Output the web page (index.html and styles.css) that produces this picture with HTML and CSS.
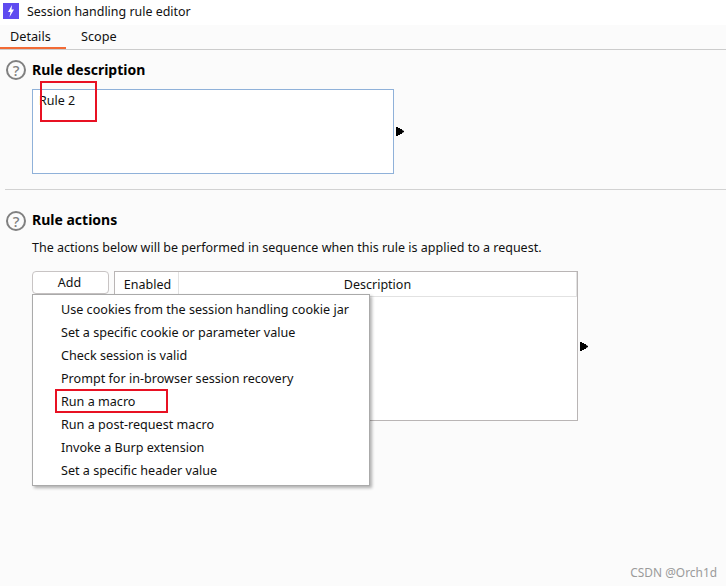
FILE: index.html
```html
<!DOCTYPE html>
<html lang="en">
<head>
  <meta charset="UTF-8">
  <meta name="viewport" content="width=device-width, initial-scale=1">
  <title>Session handling rule editor</title>
  <link rel="stylesheet" href="styles.css">
</head>
<body>
  <!-- Window title -->
  <div class="titlebar">
    <svg class="app-icon" width="16" height="16" viewBox="0 0 16 16">
      <rect width="16" height="16" fill="#5f4bf0"/>
      <path d="M9 2 L5 9 H7.5 L6.5 14 L11 6.5 H8.5 Z" fill="#fff"/>
    </svg>
    <span>Session handling rule editor</span>
  </div>

  <!-- Tabs -->
  <div class="tabs">
    <div class="tab active">Details</div>
    <div class="tab">Scope</div>
  </div>

  <!-- Rule description -->
  <section class="section first">
    <div class="section-head">
      <span class="help">?</span>
      <h2>Rule description</h2>
    </div>
    <div class="with-arrow">
      <div class="desc-box">Rule 2</div>
      <span class="arrow"></span>
    </div>
    <div class="mark mark-rule"></div>
  </section>

  <div class="divider"></div>

  <!-- Rule actions -->
  <section class="section second">
    <div class="section-head">
      <span class="help">?</span>
      <h2>Rule actions</h2>
    </div>
    <p class="intro">The actions below will be performed in sequence when this rule is applied to a request.</p>
    <div class="actions">
      <button class="add-btn">Add</button>
      <div class="table">
        <div class="table-head">
          <div class="col-enabled">Enabled</div>
          <div class="col-desc">Description</div>
        </div>
      </div>
      <span class="arrow"></span>

      <!-- Popup menu of Add -->
      <ul class="menu">
        <li>Use cookies from the session handling cookie jar</li>
        <li>Set a specific cookie or parameter value</li>
        <li>Check session is valid</li>
        <li>Prompt for in-browser session recovery</li>
        <li class="marked">Run a macro</li>
        <li>Run a post-request macro</li>
        <li>Invoke a Burp extension</li>
        <li>Set a specific header value</li>
      </ul>
    </div>
  </section>

  <div class="watermark">CSDN @Orch1d</div>
</body>
</html>
```

FILE: styles.css
```css
html, body {
  margin: 0;
  padding: 0;
  height: 100%;
  overflow: hidden;
}
body {
  position: relative;
  background-color: #fbfbfb;
  color: #111;
  font-family: "Noto Sans", "Open Sans", sans-serif;
  font-size: 12.5px;
}
/* Window title */
.titlebar {
  display: flex;
  align-items: center;
  gap: 8px;
  height: 25px;
  padding: 0 0 3px 3px;
  box-sizing: border-box;
  background: #fff;
  font-size: 12.45px;
}
.app-icon {
  display: block;
}
/* Tabs */
.tabs {
  display: flex;
  height: 25px;
  box-sizing: border-box;
  border-bottom: 1px solid #ccc;
}
.tab {
  width: 66px;
  height: 24px;
  box-sizing: border-box;
  padding: 2px 0 0 10px;
  font-size: 12.7px;
}
.tab:last-child {
  padding-left: 15px;
}
.tab.active {
  border-bottom: 2px solid #f26a35;
}
/* Sections */
.section {
  position: relative;
  padding-left: 6px;
}
.section.first {
  padding-top: 10px;
}
.section.second {
  padding-top: 21px;
}
.section-head {
  display: flex;
  align-items: center;
  gap: 6px;
  height: 20px;
}
.section-head h2 {
  margin: 0 0 3px;
  font-size: 14px;
  font-weight: 700;
  color: #000;
}
.section.first h2 {
  margin-bottom: 1px;
}
.help {
  width: 20px;
  height: 20px;
  box-sizing: border-box;
  border: 2px solid #808080;
  border-radius: 50%;
  color: #808080;
  font-size: 15px;
  font-weight: 500;
  line-height: 16px;
  text-align: center;
}
.with-arrow {
  display: flex;
  align-items: center;
  gap: 2px;
  margin: 9px 0 0 26px;
}
.desc-box {
  width: 362px;
  height: 85px;
  box-sizing: border-box;
  padding: 2px 6px;
  background: #fff;
  border: 1px solid #8fb1d9;
}
/* Small stepped play arrow */
.arrow {
  display: block;
  width: 8px;
  height: 9px;
  background: #000;
  clip-path: polygon(0 0, 25% 0, 25% 11%, 50% 11%, 50% 22%, 75% 22%, 75% 33%, 100% 44%, 100% 56%, 75% 67%, 75% 78%, 50% 78%, 50% 89%, 25% 89%, 25% 100%, 0 100%);
}
.divider {
  height: 1px;
  margin: 15px 0 0 5px;
  background: #d2d2d2;
}
.intro {
  margin: 8px 0 0 26px;
  line-height: 18px;
}
/* Button, table and its popup */
.actions {
  position: relative;
  display: flex;
  align-items: flex-start;
  margin: 14px 0 0 26px;
}
.add-btn {
  width: 77px;
  height: 23px;
  padding: 0 2px 0 0;
  background: #fff;
  border: 1px solid #c8c4c4;
  border-radius: 4px;
  color: #111;
  font: inherit;
}
.table {
  width: 464px;
  height: 150px;
  margin-left: 5px;
  box-sizing: border-box;
  background: #fff;
  border: 1px solid #b9b5b5;
}
.table-head {
  display: flex;
  height: 25px;
  box-sizing: border-box;
  border-bottom: 1px solid #e2e2e2;
  border-right: 1px solid #e2e2e2;
  line-height: 26px;
}
.col-enabled {
  width: 64px;
  padding-left: 2px;
  box-sizing: border-box;
  border-right: 1px solid #e2e2e2;
  text-align: center;
}
.col-desc {
  flex: 1;
  text-align: center;
}
.actions .arrow {
  margin: 71px 0 0 2px;
}
.menu {
  position: absolute;
  top: 23px;
  left: 0;
  width: 338px;
  height: 192px;
  box-sizing: border-box;
  margin: 0;
  padding: 3px 0 0;
  list-style: none;
  background: #fff;
  border: 1px solid #aaa;
  box-shadow: 2px 2px 3px rgba(0, 0, 0, 0.3);
  font-size: 12.6px;
}
.menu li {
  position: relative;
  height: 23px;
  padding-left: 28px;
  line-height: 23px;
}
/* Red marks drawn over the screenshot */
.mark-rule {
  position: absolute;
  top: 31px;
  left: 40px;
  width: 57px;
  height: 41px;
  box-sizing: border-box;
  border: 2px solid #e81123;
}
.menu li.marked::after {
  content: "";
  position: absolute;
  top: -1px;
  left: 22px;
  width: 113px;
  height: 24px;
  box-sizing: border-box;
  border: 2px solid #e81123;
}
.watermark {
  position: absolute;
  right: 9px;
  bottom: 6px;
  color: #9a9a9a;
  font-size: 11.9px;
}
```
